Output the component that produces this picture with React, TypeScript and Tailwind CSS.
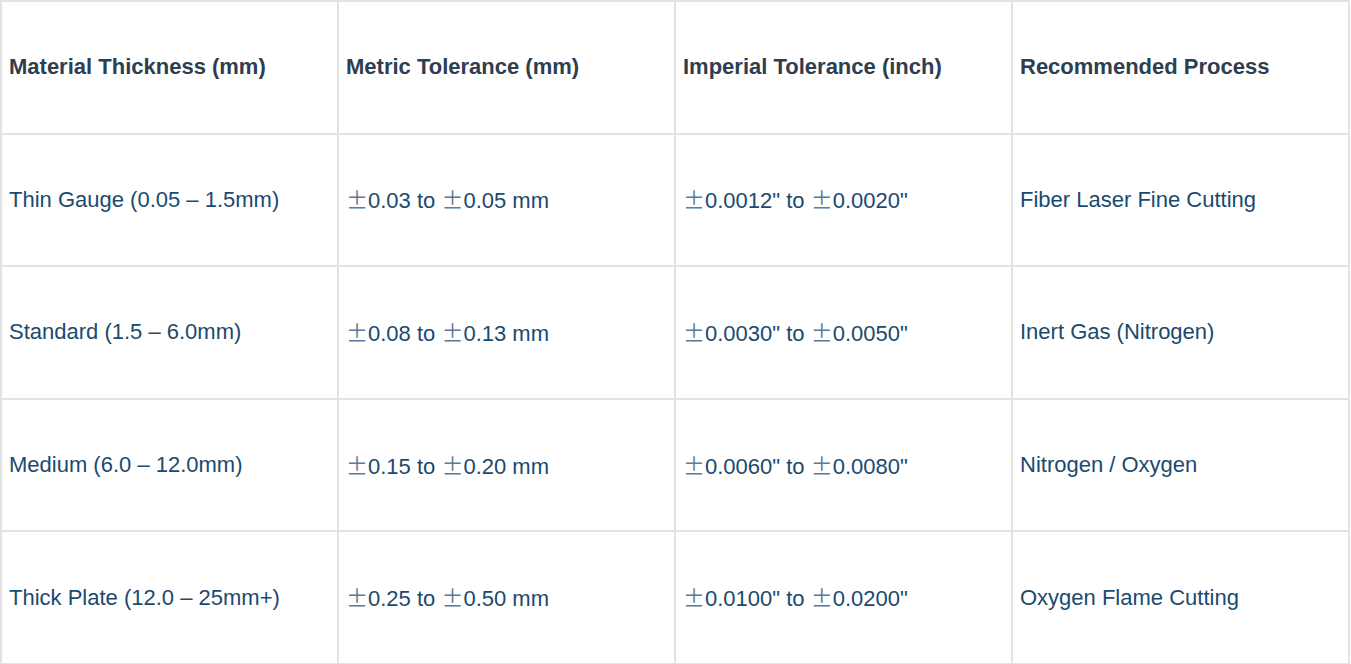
import React from "react";

const header = [
  "Material Thickness (mm)",
  "Metric Tolerance (mm)",
  "Imperial Tolerance (inch)",
  "Recommended Process",
];

const rows: string[][] = [
  ["Thin Gauge (0.05 – 1.5mm)", "±0.03 to ±0.05 mm", "±0.0012\" to ±0.0020\"", "Fiber Laser Fine Cutting"],
  ["Standard (1.5 – 6.0mm)", "±0.08 to ±0.13 mm", "±0.0030\" to ±0.0050\"", "Inert Gas (Nitrogen)"],
  ["Medium (6.0 – 12.0mm)", "±0.15 to ±0.20 mm", "±0.0060\" to ±0.0080\"", "Nitrogen / Oxygen"],
  ["Thick Plate (12.0 – 25mm+)", "±0.25 to ±0.50 mm", "±0.0100\" to ±0.0200\"", "Oxygen Flame Cutting"],
];

function Cell({ text }: { text: string }) {
  const parts = text.split("±");
  return (
    <>
      {parts.map((p, i) => (
        <React.Fragment key={i}>
          {i > 0 && (
            <span className="text-[#5a7a95]" style={{ fontFamily: '"Noto Sans CJK JP", sans-serif' }}>
              ±
            </span>
          )}
          {p}
        </React.Fragment>
      ))}
    </>
  );
}

export default function App() {
  return (
    <div className="w-[1351px] h-[664px] bg-white" style={{ fontFamily: '"Liberation Sans", Arial, sans-serif' }}>
      <table className="w-[1350px] border-collapse table-fixed">
        <thead>
          <tr className="h-[132.6px]">
            {header.map((h) => (
              <th
                key={h}
                className="border-2 border-[#e3e3e3] text-left align-middle pl-[7px] pr-[7px] text-[22px] leading-[26px] font-bold text-[#2c3e50]"
              >
                {h}
              </th>
            ))}
          </tr>
        </thead>
        <tbody>
          {rows.map((r, ri) => (
            <tr key={ri} className="h-[132.6px]">
              {r.map((c, ci) => (
                <td
                  key={ci}
                  className="border-2 border-[#e3e3e3] text-left align-middle pl-[7px] pr-[7px] text-[22px] leading-[26px] text-[#1b4a6f]"
                >
                  <Cell text={c} />
                </td>
              ))}
            </tr>
          ))}
        </tbody>
      </table>
    </div>
  );
}
